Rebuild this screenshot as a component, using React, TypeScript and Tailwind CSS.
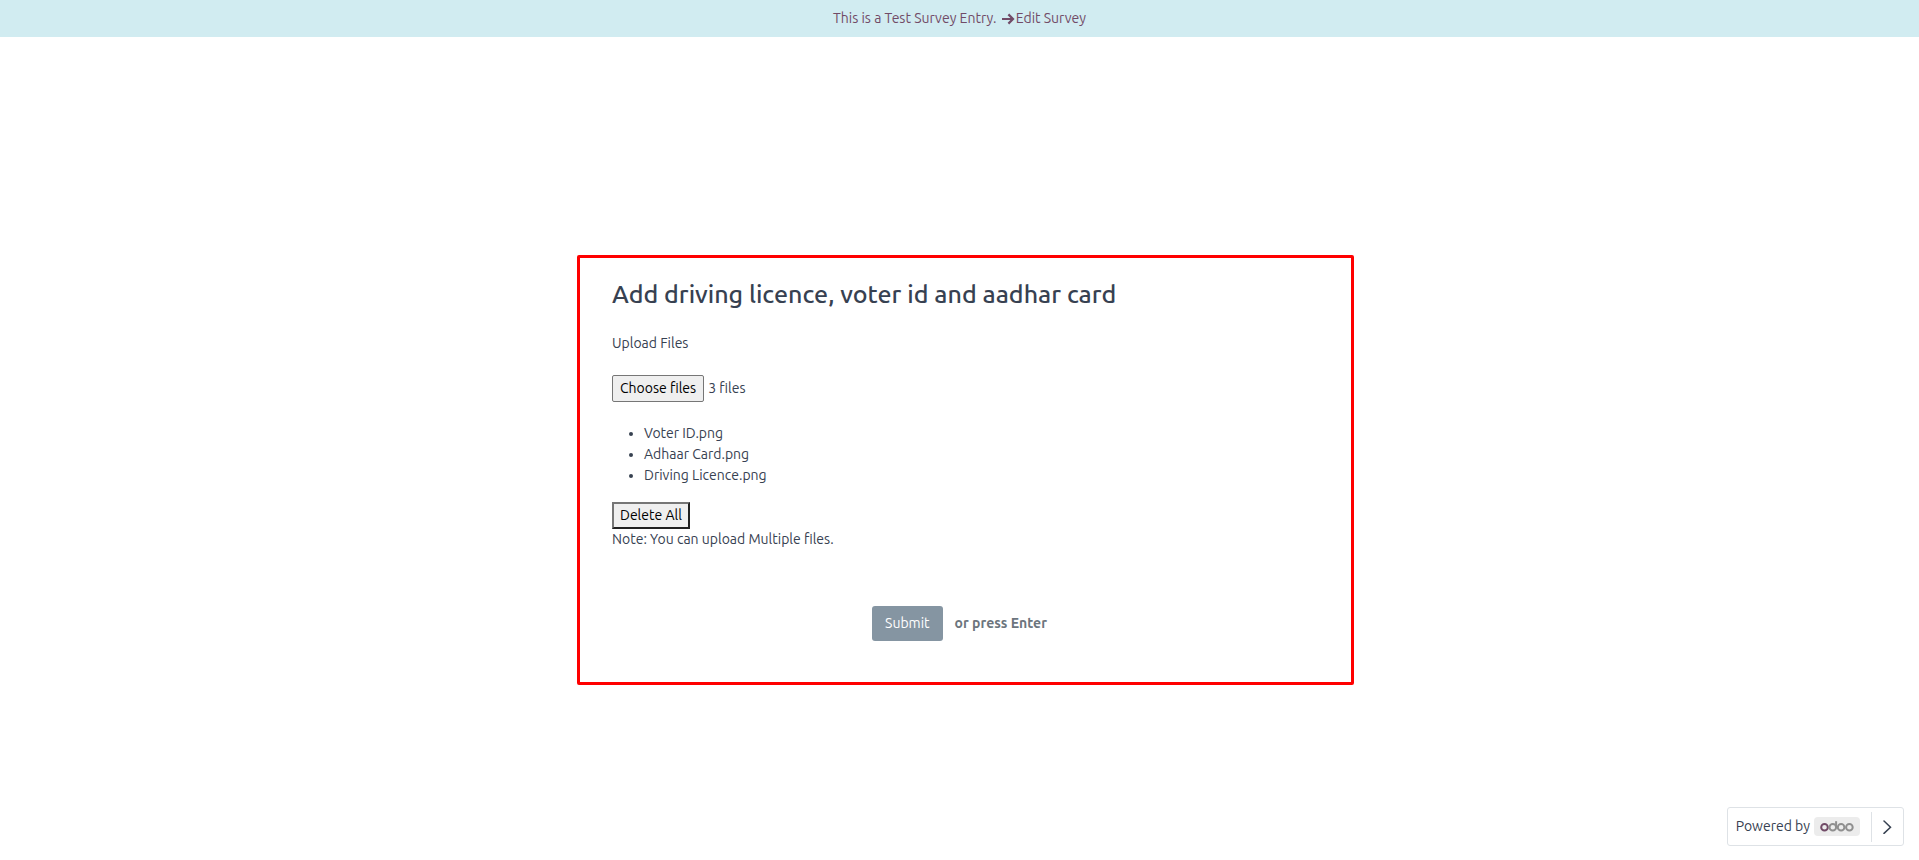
const files = ["Voter ID.png", "Adhaar Card.png", "Driving Licence.png"];

function OdooLogo() {
  return (
    <svg viewBox="0 0 34 14" className="h-[14px] w-[34px]" fill="none" strokeWidth="2" role="img" aria-label="odoo">
      <circle cx="4.5" cy="7.2" r="3.3" stroke="#714b67" />
      <circle cx="12.8" cy="7.2" r="3.3" stroke="#8f8f8f" />
      <path d="M16.1 7.2V1.2" stroke="#8f8f8f" />
      <circle cx="21.1" cy="7.2" r="3.3" stroke="#8f8f8f" />
      <circle cx="29.4" cy="7.2" r="3.3" stroke="#8f8f8f" />
    </svg>
  );
}

function Arrow() {
  return (
    <svg viewBox="0 0 14 14" className="mx-px size-[14px]" fill="none" stroke="currentColor" strokeWidth="2.2" aria-hidden="true">
      <path d="M1 7h11M7.4 2.4l4.6 4.6-4.6 4.6" />
    </svg>
  );
}

export default function App() {
  return (
    <div className="flex min-h-screen flex-col bg-white font-['Ubuntu','Noto_Sans',sans-serif] text-sm leading-[21px] text-[#374151]">
      <header className="flex h-[37px] items-center justify-center bg-[#d1ecf1] text-[#714b67]">
        <a href="#edit" className="flex items-center whitespace-pre">
          This is a Test Survey Entry. <Arrow />
          Edit Survey
        </a>
      </header>

      <main className="flex grow flex-col items-center pt-[218px] pl-3">
        <form className="w-full max-w-[777px] rounded-xs border-3 border-[#ff0000] pt-5 pr-11 pb-[41px] pl-8" onSubmit={(e) => e.preventDefault()}>
          <h1 className="font-['Ubuntu_Medium','Ubuntu','Noto_Sans',sans-serif] text-[25px] leading-8 font-medium">Add driving licence, voter id and aadhar card</h1>
          <p className="mt-[23px]">Upload Files</p>
          <div className="mt-[21px] flex items-center gap-1">
            <input id="upload" type="file" multiple className="peer sr-only" />
            <label htmlFor="upload" className="rounded-xs border border-[#767676] bg-[#efefef] px-[7px] py-[2px] text-black">Choose files</label>
            <span>3 files</span>
          </div>
          <ul className="mt-[21px] list-disc pl-8">
            {files.map((name) => (
              <li key={name}>{name}</li>
            ))}
          </ul>
          <button type="button" className="mt-4 border-2 border-t-[#767676] border-r-[#212121] border-b-[#212121] border-l-[#767676] bg-[#efefef] px-[6px] py-px text-black">Delete All</button>
          <p>Note: You can upload Multiple files.</p>
          <div className="mt-14 flex items-center justify-center gap-3">
            <button type="submit" className="rounded-[3px] bg-[#8595a2] px-[13px] py-[7px] text-white">Submit</button>
            <span className="font-bold text-[#6c757d]">or press Enter</span>
          </div>
        </form>
      </main>

      <footer className="flex justify-end pr-[15px] pb-[14px]">
        <div className="flex h-[39px] items-center rounded-[3px] border border-[#dee2e6] pl-2">
          <span>Powered by</span>
          <a href="#odoo" className="ml-1 flex h-[19px] items-center rounded-[4px] bg-[#ececec] px-[6px]">
            <OdooLogo />
          </a>
          <button type="button" aria-label="Next" className="ml-[11px] flex h-[30px] w-8 items-center justify-center border-l border-[#dee2e6]">
            <svg viewBox="0 0 14 14" className="size-[14px]" fill="none" stroke="currentColor" strokeWidth="1.5" strokeLinecap="round">
              <path d="M3 1l6.5 6.2L3 13.4" />
            </svg>
          </button>
        </div>
      </footer>
    </div>
  );
}
